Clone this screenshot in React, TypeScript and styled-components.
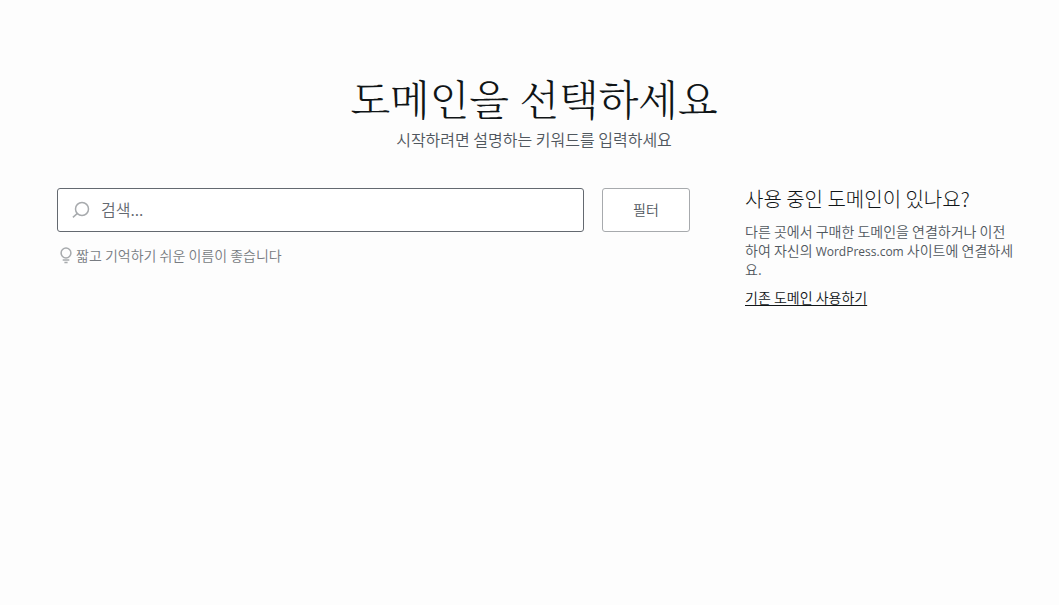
import React from "react";
import styled, { createGlobalStyle } from "styled-components";

const GlobalStyle = createGlobalStyle`
  *, *::before, *::after { box-sizing: border-box; }
  body {
    margin: 0;
    background: #fdfdfd;
    color: #50575e;
    font-family: "Noto Sans CJK KR", sans-serif;
    font-size: 14px;
  }
`;

const Page = styled.main`
  padding: 72px 44px 32px 57px;
`;

const Header = styled.header`
  padding-right: 4px;
  text-align: center;
`;

const Title = styled.h1`
  margin: 0;
  color: #101517;
  font-family: "Noto Serif CJK KR", Batang, "Noto Sans CJK KR", serif;
  font-size: 41px;
  font-weight: 300;
  line-height: 52px;
`;

const Subtitle = styled.p`
  margin: 0;
  font-size: 16px;
  font-weight: 350;
  line-height: 30px;
`;

const Content = styled.div`
  display: flex;
  align-items: flex-start;
  gap: 55px;
  margin-top: 34px;
`;

const SearchPanel = styled.section`
  flex: 1;
  min-width: 0;
`;

const SearchRow = styled.form`
  display: flex;
  gap: 18px;
`;

const SearchField = styled.label`
  display: flex;
  flex: 1;
  align-items: center;
  gap: 10px;
  min-width: 0;
  height: 44px;
  padding: 0 14px 2px;
  border: 1px solid #646970;
  border-radius: 3px;
  background: #fff;
`;

const SearchInput = styled.input`
  flex: 1;
  min-width: 0;
  padding: 0;
  border: 0;
  outline: 0;
  background: transparent;
  color: #2c3338;
  font: 350 16px/24px "Noto Sans CJK KR", sans-serif;

  &::placeholder {
    color: #646970;
    opacity: 1;
  }
`;

const FilterButton = styled.button`
  width: 88px;
  height: 44px;
  padding: 0 0 2px;
  border: 1px solid #a7aaad;
  border-radius: 3px;
  background: #fff;
  color: #50575e;
  font: 350 14px/20px "Noto Sans CJK KR", sans-serif;
`;

const Hint = styled.p`
  display: flex;
  align-items: center;
  gap: 2px;
  margin: 13px 0 0;
  padding-left: 2px;
  color: #787c82;
  font-weight: 350;
  line-height: 20px;
`;

const Icon = styled.svg`
  flex: none;
  fill: none;
  stroke: #a7aaad;
`;

const Aside = styled.aside`
  width: 270px;
  font-weight: 350;
`;

const AsideTitle = styled.h2`
  margin: 0 0 12px;
  color: #101517;
  font-size: 20px;
  font-weight: 300;
  line-height: 22px;
`;

const Description = styled.p`
  margin: 0 0 8px;
  line-height: 19px;
  word-break: break-all;
`;

const Brand = styled.span`
  font-family: "Open Sans", sans-serif;
  font-size: 12px;
  font-weight: 400;
  line-height: 1;
`;

const DomainLink = styled.a`
  display: inline-block;
  color: #101517;
  line-height: 20px;
  text-decoration: underline;
  text-underline-offset: 2px;
`;

export default function App() {
  return (
    <>
      <GlobalStyle />
      <Page>
        <Header>
          <Title>도메인을 선택하세요</Title>
          <Subtitle>시작하려면 설명하는 키워드를 입력하세요</Subtitle>
        </Header>
        <Content>
          <SearchPanel>
            <SearchRow role="search" onSubmit={(e) => e.preventDefault()}>
              <SearchField>
                <Icon width="19" height="18" viewBox="0 0 19 18" strokeWidth="1.5" aria-hidden="true">
                  <circle cx="10" cy="9" r="6.5" />
                  <path d="M5.4 13.4 0.9 17.4" />
                </Icon>
                <SearchInput type="search" placeholder="검색..." aria-label="검색" />
              </SearchField>
              <FilterButton type="button">필터</FilterButton>
            </SearchRow>
            <Hint>
              <Icon width="15" height="18" viewBox="0 0 15 18" strokeWidth="1.5" aria-hidden="true">
                <circle cx="7" cy="7" r="4.9" />
                <path d="M3.7 14H10.3M5.4 16.4H8.6" />
              </Icon>
              짧고 기억하기 쉬운 이름이 좋습니다
            </Hint>
          </SearchPanel>
          <Aside>
            <AsideTitle>사용 중인 도메인이 있나요?</AsideTitle>
            <Description>
              다른 곳에서 구매한 도메인을 연결하거나 이전하여 자신의 <Brand>WordPress.com</Brand> 사이트에 연결하세요.
            </Description>
            <DomainLink href="#use-domain">기존 도메인 사용하기</DomainLink>
          </Aside>
        </Content>
      </Page>
    </>
  );
}
